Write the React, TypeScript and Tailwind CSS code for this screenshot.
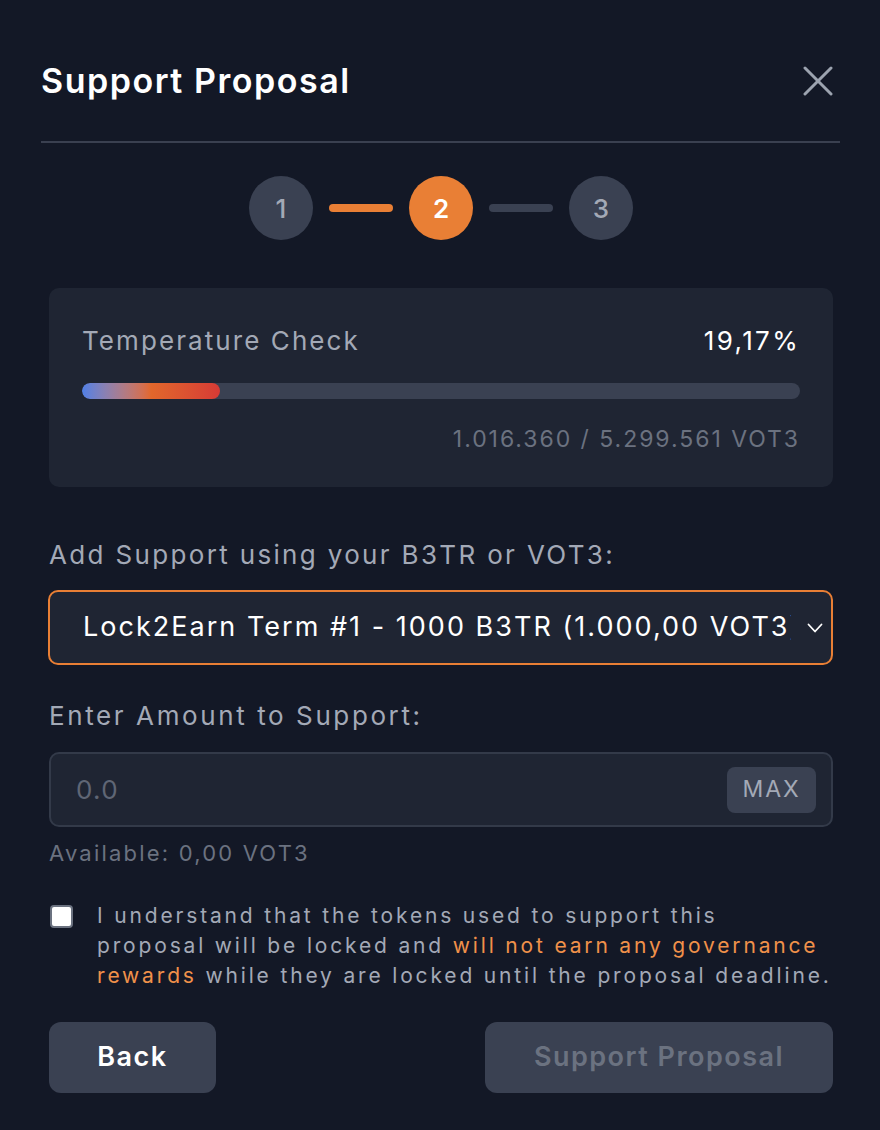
import { useState } from 'react'

export default function App() {
  const [agreed, setAgreed] = useState(false)
  const percent = 19.17

  return (
    <div
      className="w-[880px] h-[1130px] bg-[#131826] text-white overflow-hidden"
      style={{ fontFamily: 'Inter, "Noto Sans", sans-serif' }}
    >
      {/* Header */}
      <div className="pl-[41px] pr-[40px] pt-[56px]">
        <div className="flex items-center justify-between h-[50px]">
          <h1 className="text-[34px] font-semibold tracking-[0.045em] leading-[50px]">Support Proposal</h1>
          <button className="mr-[7px] text-[#9ca3af]" aria-label="Close">
            <svg width="30" height="30" viewBox="0 0 30 30" fill="none" stroke="currentColor" strokeWidth="3" strokeLinecap="round">
              <path d="M2 2 28 28" />
              <path d="M28 2 2 28" />
            </svg>
          </button>
        </div>
        <div className="mt-[35px] h-[2px] bg-[#3a4050]" />
      </div>

      <div className="pl-[49px] pr-[47px]">
        {/* Steps */}
        <div className="mt-[33px] flex items-center justify-center gap-4">
          <div className="w-16 h-16 rounded-full bg-[#3a4152] flex items-center justify-center text-[26px] font-medium text-[#a3a9b6]">1</div>
          <div className="w-16 h-2 rounded-full bg-[#e97f35]" />
          <div className="w-16 h-16 rounded-full bg-[#e97f35] flex items-center justify-center text-[26px] font-semibold text-white">2</div>
          <div className="w-16 h-2 rounded-full bg-[#3a4152]" />
          <div className="w-16 h-16 rounded-full bg-[#3a4152] flex items-center justify-center text-[26px] font-medium text-[#a3a9b6]">3</div>
        </div>

        {/* Temperature card */}
        <div className="mt-[48px] rounded-[10px] bg-[#1f2533] px-[33px] pt-[34px] pb-[32px]">
          <div className="flex items-center justify-between h-[36px]">
            <span className="text-[26px] tracking-[0.08em] text-[#a3a9b6]">Temperature Check</span>
            <span className="text-[26px] tracking-[0.09em] text-white">19,17%</span>
          </div>
          <div className="mt-[25px] h-4 rounded-full bg-[#3a4152] overflow-hidden">
            <div
              className="h-full rounded-full bg-gradient-to-r from-[#4f7fe6] via-[#e2672b] to-[#d63a35]"
              style={{ width: `${percent}%` }}
            />
          </div>
          <div className="mt-[24px] text-right text-[23px] leading-[32px] tracking-[0.085em] text-[#6b7280]">
            1.016.360 / 5.299.561 VOT3
          </div>
        </div>

        {/* Select */}
        <div className="mt-[50px] text-[26px] leading-[36px] tracking-[0.09em] text-[#a3a9b6]">
          Add Support using your B3TR or VOT3:
        </div>
        <div className="mt-[17px] -ml-px h-[75px] rounded-[10px] border-2 border-[#e97f35] bg-[#1f2533] flex items-center pl-[33px] pr-[8px]">
          <span className="flex-1 overflow-hidden whitespace-nowrap text-[27px] tracking-[0.075em] text-white">
            Lock2Earn Term #1 - 1000 B3TR (1.000,00 VOT3)
          </span>
          <svg className="ml-[16px] shrink-0 text-white" width="16" height="10" viewBox="0 0 16 10" fill="none" stroke="currentColor" strokeWidth="1.8" strokeLinecap="round" strokeLinejoin="round">
            <path d="M1.5 1.5 8 8.5 14.5 1.5" />
          </svg>
        </div>

        {/* Amount */}
        <div className="mt-[33px] text-[26px] leading-[36px] tracking-[0.1em] text-[#a3a9b6]">
          Enter Amount to Support:
        </div>
        <div className="mt-[18px] h-[75px] rounded-[10px] border-2 border-[#333a49] bg-[#1f2533] flex items-center pl-[25px] pr-[15px]">
          <input
            className="flex-1 bg-transparent outline-none text-[26px] tracking-[0.05em] text-white placeholder:text-[#5f6675]"
            placeholder="0.0"
          />
          <button className="h-[46px] w-[89px] rounded-lg bg-[#3a4152] text-[23px] tracking-[0.08em] text-[#a3a9b6]">MAX</button>
        </div>
        <div className="mt-[11px] text-[22px] leading-[30px] tracking-[0.1em] text-[#6b7280]">
          Available: 0,00 VOT3
        </div>

        {/* Consent */}
        <div className="mt-[33px] flex items-start">
          <button
            onClick={() => setAgreed(!agreed)}
            className="mt-[4px] ml-px w-[23px] h-[23px] shrink-0 rounded-[4px] bg-white border-2 border-[#6b7280]"
            aria-label="I understand"
          />
          <p className="ml-[24px] whitespace-nowrap text-[21px] leading-[30px] tracking-[0.135em] text-[#a3a9b6]">
            I understand that the tokens used to support this
            <br />
            proposal will be locked and <span className="text-[#f0914a]">will not earn any governance</span>
            <br />
            <span className="text-[#f0914a]">rewards</span> while they are locked until the proposal deadline.
          </p>
        </div>

        {/* Actions */}
        <div className="mt-[31px] flex items-center justify-between">
          <button className="h-[71px] w-[167px] rounded-xl bg-[#3a4152] text-[27px] font-semibold tracking-[0.055em] text-white">
            Back
          </button>
          <button disabled className="h-[71px] w-[348px] rounded-xl bg-[#3a4152] text-[27px] font-semibold tracking-[0.055em] text-[#6b7280]">
            Support Proposal
          </button>
        </div>
      </div>
    </div>
  )
}
